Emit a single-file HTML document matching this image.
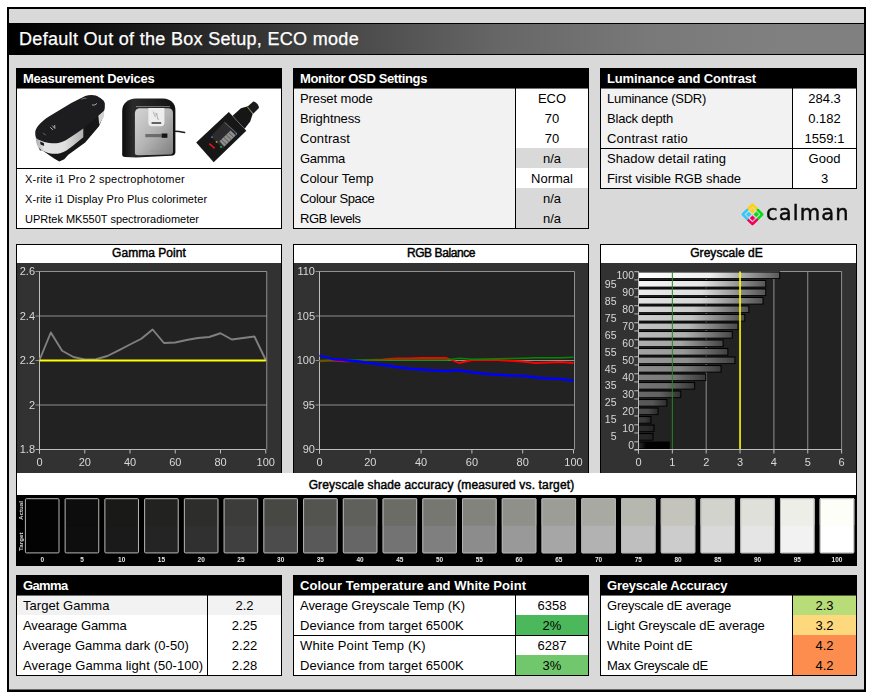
<!DOCTYPE html>
<html><head><meta charset="utf-8"><title>Default Out of the Box Setup, ECO mode</title>
<style>

html,body{margin:0;padding:0;background:#fff;}
body{width:873px;height:692px;overflow:hidden;position:relative;font-family:"Liberation Sans",sans-serif;color:#000;}
.abs{position:absolute;box-sizing:border-box;}
.frame{left:7px;top:7px;width:859px;height:685px;border:2px solid #000;background:#d9d9d9;box-shadow:inset 0 -1px 0 rgba(0,0,0,0.5);}
.title{left:9px;top:23px;width:855px;height:32px;background:linear-gradient(to right,#000 0%,#020202 2%,#131313 12%,#292929 23%,#3f3f3f 35%,#4b4b4b 41%,#666 57%,#797979 75%,#808080 90%,#808080 100%);border-top:1px solid #000;border-bottom:1px solid #000;}
.title span{position:absolute;left:10px;top:5px;font-size:18px;color:#fff;white-space:nowrap;letter-spacing:0.31px;-webkit-text-stroke:0.25px #fff;}
.panel{border:1px solid #000;background:#fff;overflow:hidden;}
.hd{left:0;top:0;right:0;height:19px;background:#000;color:#fff;font-weight:bold;font-size:13px;line-height:19px;padding-left:6px;white-space:nowrap;}
.row{left:0;height:20px;font-size:13px;line-height:22px;white-space:nowrap;}
.lab{left:0;top:0;height:20px;padding-left:6px;}
.val{top:0;height:20px;text-align:center;}
.g{background:#f2f2f2;}
.na{background:#d9d9d9;}
.sm{font-size:11px;line-height:20px;left:8px;white-space:nowrap;letter-spacing:0.1px;}
.ct{left:0;right:0;top:0;height:18px;background:#fff;font-weight:normal;-webkit-text-stroke:0.45px #000;font-size:12px;line-height:17px;text-align:center;}
svg text{font-family:"Liberation Sans",sans-serif;}

</style></head><body>
<div class="abs frame"></div>
<div class="abs title"><span>Default Out of the Box Setup, ECO mode</span></div>
<div class="abs panel " style="left:16px;top:68px;width:266px;height:161px;">
<div class="abs hd" style="letter-spacing:-0.27px">Measurement Devices</div><div class="abs" style="left:0;top:20px;width:264px;height:79px;background:#fff;"><svg class="abs" style="left:0;top:0;will-change:transform;" width="264" height="79" viewBox="17 89 264 79">
<defs>
<linearGradient id="sv1" x1="0" y1="0" x2="1" y2="0"><stop offset="0" stop-color="#a8a8a8"/><stop offset="0.18" stop-color="#e4e4e4"/><stop offset="0.6" stop-color="#e0e0e0"/><stop offset="1" stop-color="#b0b0b0"/></linearGradient>
<linearGradient id="sv2" x1="0" y1="0" x2="1" y2="1"><stop offset="0" stop-color="#d6d6d6"/><stop offset="0.5" stop-color="#b4b4b4"/><stop offset="1" stop-color="#7e7e7e"/></linearGradient>
<linearGradient id="bk2" x1="0" y1="0" x2="1" y2="0"><stop offset="0" stop-color="#0c0c0c"/><stop offset="0.2" stop-color="#2a2a2a"/><stop offset="1" stop-color="#111"/></linearGradient>
</defs>
<!-- device 1 : spectrophotometer -->
<path d="M38.4,147.3 L40,150.4 L42.2,150.2 L49.7,155.5 L54.5,158.7 L59.3,161.5 L64.3,159.3 L68.3,154.7 L85.2,142.4 L99,126.2 L103.9,115 L103.9,110 L83.3,127 L60,150 Z" fill="#161616"/>
<path d="M35.6,135 L36,140.8 C36.5,144 37.5,146 38.4,147.3 C40,149.5 42,150.5 44,151.3 C47,152.8 50,153.5 52.1,153.7 C55,154 58,153.8 60.1,153.3 C62.5,152.6 64.5,151.7 66.5,150.5 L72.9,145.7 L83.3,137.2 L83.3,127.5 L68.1,138 L52,143 L40,140 Z" fill="url(#sv1)"/>
<path d="M98.3,115.2 L104.2,110 L104,116.5 L99.2,124.5 Z" fill="#d2d2d2"/>
<path d="M35.2,132.8 C35.2,128 40,122.5 48.1,116.9 L71.3,103 L85.2,96.1 C90,94.3 96,94.6 99,97.3 C103,99.5 105.5,102 104.8,105.4 C105,108 104.5,110 103.7,111.1 L83.3,128.4 L76.1,133.6 L68.1,138.8 C65,141 62,142.2 60.1,142.5 C57,143.3 54,143.4 52.1,143.3 C48,143 45,142.3 42.4,141.3 C39,140 36.5,139 36,137.6 C35.4,136 35.2,134.5 35.2,132.8 Z" fill="#1d1d1f"/>
<path d="M81.5,99.3 q2.5,-1.6 5,-1" stroke="#9a9a9a" stroke-width="0.7" fill="none"/>
<path d="M92,105 q3,0.8 5,-1.6" stroke="#b5b5b5" stroke-width="0.9" fill="none"/>
<path d="M50.2,127.3 l2.8,2.6 M52.3,125.6 l2.6,3 M54.6,125 l0.3,3.4" stroke="#d0d0d0" stroke-width="0.8" fill="none"/>
<path d="M42.8,133.2 l3.2,1.8" stroke="#8a8a8a" stroke-width="0.6" fill="none"/>
<path d="M40,141.6 L43.8,143 L44.2,145.9 L40.6,144.6 Z" fill="#1a1a1a"/>
<!-- device 2 : colorimeter -->
<path d="M122.2,154.5 L122.2,111 C122.2,103 128,98.6 136,98.4 L163,98.4 C170.5,98.6 175.4,103 175.4,110 L175.4,152 C175.4,154.5 174,155.5 171,155.8 L136,157.4 L125,157 C123,156.8 122.2,156 122.2,154.5 Z" fill="url(#bk2)"/>
<path d="M134.9,153 L134.9,113.5 C134.9,110 137,108.2 140.5,108.2 L168,108.2 C171.3,108.2 173,110 173,113 L173,151.5 C173,153.6 172,154.3 170,154.4 L138,155.2 C136,155.2 134.9,154.6 134.9,153 Z" fill="url(#sv2)"/>
<path d="M136,106.6 H170" stroke="#bdbdbd" stroke-width="0.6"/>
<path d="M148.3,108 H164.4 V122.5 C164.4,125 163,126.2 161,126.2 H151.6 C149.5,126.2 148.3,125 148.3,122.5 Z" fill="#ededed"/>
<path d="M151.6,123 H161.2" stroke="#1a1a1a" stroke-width="1.3"/>
<path d="M153.2,111.6 l2.2,5.5 M155.3,113 q2,0 0.5,2.5 M156.8,113.2 l0.8,5.8 l1.6,0.3" stroke="#777" stroke-width="0.5" fill="none"/>
<rect x="145.3" y="134" width="16" height="3.2" fill="#555" opacity="0.75"/>
<rect x="161.6" y="133.5" width="5.8" height="4.3" fill="#151515"/>
<path d="M150,151 H167" stroke="#8e8e8e" stroke-width="0.7" stroke-dasharray="1.2 0.8"/>
<path d="M175.4,131.2 L179,131.4 L184.6,132.6" stroke="#1c1c1c" stroke-width="1.5" fill="none" stroke-linecap="round"/>
<!-- device 3 : spectroradiometer -->
<path d="M232.6,115.8 L240.9,108.2 L247.8,106.3 L252.8,113.8 L250.2,121.5 L244.6,128.8 Z" fill="#161616"/>
<path d="M247.6,106.6 L253,101.7 C255,100.8 259.3,105.3 258.9,108 L253.2,113.8 Z" fill="#1b1b1b"/>
<path d="M247.3,107 L252.9,114" stroke="#c9ad4a" stroke-width="0.7"/>
<path d="M196.2,142.4 L228.8,112.1 L246.3,130.8 L213.7,162.2 Z" fill="#171717"/>
<path d="M210.8,136.6 L224.7,121.5 L237.4,133.1 L223,148.7 Z" fill="#2c2c2e"/>
<path d="M219.5,141.2 L230.5,130.6 L235.7,135.4 L224.3,146.6 Z" fill="#8f8f8f"/>
<path d="M221.2,139.6 l5,4.7 M223.7,137.2 l5,4.7 M226.2,134.8 l5,4.7 M228.6,132.5 l5,4.7" stroke="#3c3c3c" stroke-width="0.7"/>
<path d="M224.5,122.3 L236.8,133.4" stroke="#777" stroke-width="0.8"/>
<path d="M209.3,143.6 l5.4,4.8" stroke="#e0181e" stroke-width="1.5"/>
<circle cx="212" cy="137.2" r="0.9" fill="#3a7ad6"/>
<circle cx="216.6" cy="141.9" r="0.9" fill="#d9a520"/>
<circle cx="221" cy="147" r="1" fill="#21b23a"/>
<circle cx="236.3" cy="133.8" r="0.9" fill="#3a8ae6"/>
</svg>
</div><div class="abs" style="left:0;top:99px;width:264px;height:1px;background:#000;"></div><div class="abs" style="left:0;top:19px;width:264px;height:1px;background:rgba(0,0,0,0.55);"></div><div class="abs sm" style="top:100px;letter-spacing:0.23px">X-rite i1 Pro 2 spectrophotomer</div><div class="abs sm" style="top:120px;letter-spacing:0.08px">X-rite i1 Display Pro Plus colorimeter</div><div class="abs sm" style="top:140px;letter-spacing:0px">UPRtek MK550T spectroradiometer</div>
</div>
<div class="abs panel " style="left:293px;top:68px;width:296px;height:161px;">
<div class="abs hd" style="letter-spacing:-0.367px">Monitor OSD Settings</div><div class="abs row" style="top:19px;width:294px;"><div class="abs lab" style="width:221px;background:#f2f2f2;letter-spacing:-0.109px">Preset mode</div><div class="abs val" style="left:222px;width:72px;background:#fff;">ECO</div></div><div class="abs row" style="top:39px;width:294px;"><div class="abs lab" style="width:221px;background:#f2f2f2;letter-spacing:-0.092px">Brightness</div><div class="abs val" style="left:222px;width:72px;background:#fff;">70</div></div><div class="abs row" style="top:59px;width:294px;"><div class="abs lab" style="width:221px;background:#f2f2f2;letter-spacing:0.107px">Contrast</div><div class="abs val" style="left:222px;width:72px;background:#fff;">70</div></div><div class="abs row" style="top:79px;width:294px;"><div class="abs lab" style="width:221px;background:#f2f2f2;letter-spacing:-0.247px">Gamma</div><div class="abs val" style="left:222px;width:72px;background:#d9d9d9;">n/a</div></div><div class="abs row" style="top:99px;width:294px;"><div class="abs lab" style="width:221px;background:#f2f2f2;letter-spacing:0.003px">Colour Temp</div><div class="abs val" style="left:222px;width:72px;background:#fff;">Normal</div></div><div class="abs row" style="top:119px;width:294px;"><div class="abs lab" style="width:221px;background:#f2f2f2;letter-spacing:-0.357px">Colour Space</div><div class="abs val" style="left:222px;width:72px;background:#d9d9d9;">n/a</div></div><div class="abs row" style="top:139px;width:294px;"><div class="abs lab" style="width:221px;background:#f2f2f2;letter-spacing:-0.453px">RGB levels</div><div class="abs val" style="left:222px;width:72px;background:#d9d9d9;">n/a</div></div><div class="abs" style="left:221px;top:19px;width:1px;height:140px;background:#000;"></div><div class="abs" style="left:0;top:19px;width:294px;height:1px;background:rgba(0,0,0,0.55);"></div>
</div>
<div class="abs panel " style="left:600px;top:68px;width:257px;height:121px;">
<div class="abs hd" style="letter-spacing:-0.156px">Luminance and Contrast</div><div class="abs row" style="top:19px;width:255px;"><div class="abs lab" style="width:191px;background:#f2f2f2;letter-spacing:-0.289px">Luminance (SDR)</div><div class="abs val" style="left:192px;width:63px;background:#fff;">284.3</div></div><div class="abs row" style="top:39px;width:255px;"><div class="abs lab" style="width:191px;background:#f2f2f2;letter-spacing:-0.176px">Black depth</div><div class="abs val" style="left:192px;width:63px;background:#fff;">0.182</div></div><div class="abs row" style="top:59px;width:255px;"><div class="abs lab" style="width:191px;background:#f2f2f2;letter-spacing:0.211px">Contrast ratio</div><div class="abs val" style="left:192px;width:63px;background:#fff;">1559:1</div></div><div class="abs row" style="top:79px;width:255px;"><div class="abs lab" style="width:191px;background:#f2f2f2;letter-spacing:0.059px">Shadow detail rating</div><div class="abs val" style="left:192px;width:63px;background:#fff;">Good</div></div><div class="abs row" style="top:99px;width:255px;"><div class="abs lab" style="width:191px;background:#f2f2f2;letter-spacing:-0.079px">First visible RGB shade</div><div class="abs val" style="left:192px;width:63px;background:#fff;">3</div></div><div class="abs" style="left:191px;top:19px;width:1px;height:100px;background:#000;"></div><div class="abs" style="left:0;top:19px;width:255px;height:1px;background:rgba(0,0,0,0.55);"></div><div class="abs" style="left:0;top:79px;width:255px;height:1px;background:#000;"></div>
</div>
<svg class="abs" style="left:738px;top:198px;will-change:transform;" width="116" height="32" viewBox="738 198 116 32">
<g transform="translate(752.5,214.4)" fill="none" stroke-width="2.5" stroke-linecap="round" stroke-linejoin="round">
 <path d="M-4.4,-5.4 L0,-9.7 L4.4,-5.4" stroke="#ffd200"/>
 <path d="M5.4,-4.4 L9.8,0 L5.4,4.4" stroke="#00dc14"/>
 <path d="M4.4,5.4 L0,9.7 L-4.4,5.4" stroke="#f0005a"/>
 <path d="M-5.4,4.4 L-9.8,0 L-5.4,-4.4" stroke="#32c8fa"/>
 <path d="M0,-6.1 L2.4,-3.7 L0,-1.3 L-2.4,-3.7 Z" fill="#ffd200" stroke="#ffd200" stroke-width="0.6"/>
 <path d="M6.2,0 L3.8,2.4 L1.4,0 L3.8,-2.4 Z" fill="#00dc14" stroke="#00dc14" stroke-width="0.6"/>
 <path d="M0,6.1 L-2.4,3.7 L0,1.3 L2.4,3.7 Z" fill="#f0005a" stroke="#f0005a" stroke-width="0.6"/>
 <path d="M-6.2,0 L-3.8,-2.4 L-1.4,0 L-3.8,2.4 Z" fill="#32c8fa" stroke="#32c8fa" stroke-width="0.6"/>
</g>
<text x="766" y="220.4" style="font-family:'DejaVu Sans',sans-serif" font-size="21" fill="#0a0a0a" stroke="#0a0a0a" stroke-width="0.45" letter-spacing="1.15">calman</text>
</svg>
<div class="abs panel " style="left:16px;top:244px;width:266px;height:230px;">
<div class="abs ct" style="letter-spacing:0.036px">Gamma Point</div><svg class="abs" style="left:0;top:18px;will-change:transform;" width="264" height="210" viewBox="17 263 264 210"><rect x="17" y="263" width="264" height="210" fill="#323232"/><rect x="39.5" y="271.5" width="227.25" height="178.0" fill="#222222"/><line x1="35.5" y1="271.5" x2="266.75" y2="271.5" stroke="#9c9c9c" stroke-width="0.9"/><line x1="35.5" y1="316.0" x2="266.75" y2="316.0" stroke="#9c9c9c" stroke-width="0.9"/><line x1="35.5" y1="360.5" x2="266.75" y2="360.5" stroke="#9c9c9c" stroke-width="0.9"/><line x1="35.5" y1="405.0" x2="266.75" y2="405.0" stroke="#9c9c9c" stroke-width="0.9"/><line x1="266.75" y1="271.5" x2="266.75" y2="449.5" stroke="#9c9c9c" stroke-width="0.9"/><line x1="39.5" y1="271.5" x2="39.5" y2="453.5" stroke="#bdbdbd" stroke-width="1"/><line x1="35.5" y1="449.5" x2="265.75" y2="449.5" stroke="#bdbdbd" stroke-width="1"/><line x1="39.5" y1="449.5" x2="39.5" y2="453.5" stroke="#bdbdbd" stroke-width="1"/><text x="39.5" y="466" font-size="11" fill="#d8d8d8" text-anchor="middle">0</text><line x1="84.75" y1="449.5" x2="84.75" y2="453.5" stroke="#bdbdbd" stroke-width="1"/><text x="84.75" y="466" font-size="11" fill="#d8d8d8" text-anchor="middle">20</text><line x1="130.0" y1="449.5" x2="130.0" y2="453.5" stroke="#bdbdbd" stroke-width="1"/><text x="130.0" y="466" font-size="11" fill="#d8d8d8" text-anchor="middle">40</text><line x1="175.25" y1="449.5" x2="175.25" y2="453.5" stroke="#bdbdbd" stroke-width="1"/><text x="175.25" y="466" font-size="11" fill="#d8d8d8" text-anchor="middle">60</text><line x1="220.5" y1="449.5" x2="220.5" y2="453.5" stroke="#bdbdbd" stroke-width="1"/><text x="220.5" y="466" font-size="11" fill="#d8d8d8" text-anchor="middle">80</text><line x1="265.75" y1="449.5" x2="265.75" y2="453.5" stroke="#bdbdbd" stroke-width="1"/><text x="265.75" y="466" font-size="11" fill="#d8d8d8" text-anchor="middle">100</text><text x="35.0" y="275.1" font-size="11" fill="#d8d8d8" text-anchor="end">2.6</text><text x="35.0" y="319.6" font-size="11" fill="#d8d8d8" text-anchor="end">2.4</text><text x="35.0" y="364.1" font-size="11" fill="#d8d8d8" text-anchor="end">2.2</text><text x="35.0" y="408.6" font-size="11" fill="#d8d8d8" text-anchor="end">2</text><text x="35.0" y="453.1" font-size="11" fill="#d8d8d8" text-anchor="end">1.8</text><polyline points="39.50,360.00 50.81,332.50 62.12,350.75 73.44,357.00 84.75,359.50 96.06,359.25 107.38,356.00 118.69,350.30 130.00,344.50 141.31,338.75 152.62,329.50 163.94,343.00 175.25,342.50 186.56,340.00 197.88,338.00 209.19,337.00 220.50,333.25 231.81,339.50 243.12,338.00 254.44,336.50 265.75,360.00" fill="none" stroke="#808080" stroke-width="1.9" stroke-linejoin="round"/><line x1="39.5" y1="360.5" x2="265.75" y2="360.5" stroke="#ffff00" stroke-width="2"/></svg>
</div>
<div class="abs panel " style="left:293px;top:244px;width:296px;height:230px;">
<div class="abs ct" style="letter-spacing:-0.405px">RGB Balance</div><svg class="abs" style="left:0;top:18px;will-change:transform;" width="294" height="210" viewBox="294 263 294 210"><rect x="294" y="263" width="294" height="210" fill="#323232"/><rect x="319.5" y="271.5" width="255.0" height="178.0" fill="#222222"/><line x1="315.5" y1="271.5" x2="574.5" y2="271.5" stroke="#9c9c9c" stroke-width="0.9"/><line x1="315.5" y1="316.0" x2="574.5" y2="316.0" stroke="#9c9c9c" stroke-width="0.9"/><line x1="315.5" y1="360.5" x2="574.5" y2="360.5" stroke="#9c9c9c" stroke-width="0.9"/><line x1="315.5" y1="405.0" x2="574.5" y2="405.0" stroke="#9c9c9c" stroke-width="0.9"/><line x1="574.5" y1="271.5" x2="574.5" y2="449.5" stroke="#9c9c9c" stroke-width="0.9"/><line x1="319.5" y1="271.5" x2="319.5" y2="453.5" stroke="#bdbdbd" stroke-width="1"/><line x1="315.5" y1="449.5" x2="573.5" y2="449.5" stroke="#bdbdbd" stroke-width="1"/><line x1="319.5" y1="449.5" x2="319.5" y2="453.5" stroke="#bdbdbd" stroke-width="1"/><text x="319.5" y="466" font-size="11" fill="#d8d8d8" text-anchor="middle">0</text><line x1="370.3" y1="449.5" x2="370.3" y2="453.5" stroke="#bdbdbd" stroke-width="1"/><text x="370.3" y="466" font-size="11" fill="#d8d8d8" text-anchor="middle">20</text><line x1="421.1" y1="449.5" x2="421.1" y2="453.5" stroke="#bdbdbd" stroke-width="1"/><text x="421.1" y="466" font-size="11" fill="#d8d8d8" text-anchor="middle">40</text><line x1="471.9" y1="449.5" x2="471.9" y2="453.5" stroke="#bdbdbd" stroke-width="1"/><text x="471.9" y="466" font-size="11" fill="#d8d8d8" text-anchor="middle">60</text><line x1="522.7" y1="449.5" x2="522.7" y2="453.5" stroke="#bdbdbd" stroke-width="1"/><text x="522.7" y="466" font-size="11" fill="#d8d8d8" text-anchor="middle">80</text><line x1="573.5" y1="449.5" x2="573.5" y2="453.5" stroke="#bdbdbd" stroke-width="1"/><text x="573.5" y="466" font-size="11" fill="#d8d8d8" text-anchor="middle">100</text><text x="315.0" y="275.1" font-size="11" fill="#d8d8d8" text-anchor="end">110</text><text x="315.0" y="319.6" font-size="11" fill="#d8d8d8" text-anchor="end">105</text><text x="315.0" y="364.1" font-size="11" fill="#d8d8d8" text-anchor="end">100</text><text x="315.0" y="408.6" font-size="11" fill="#d8d8d8" text-anchor="end">95</text><text x="315.0" y="453.1" font-size="11" fill="#d8d8d8" text-anchor="end">90</text><polyline points="319.50,361.25 332.20,360.50 344.90,361.25 357.60,361.00 370.30,360.00 383.00,359.50 395.70,358.50 408.40,358.50 421.10,358.00 433.80,358.00 446.50,358.00 459.20,363.00 471.90,360.00 484.60,360.00 497.30,360.00 510.00,360.75 522.70,361.50 535.40,363.00 548.10,362.50 560.80,362.00 573.50,363.00" fill="none" stroke="#ff0000" stroke-width="1.8" stroke-linejoin="round"/><polyline points="319.50,360.50 332.20,360.20 344.90,360.00 357.60,360.00 370.30,360.00 383.00,360.00 395.70,360.00 408.40,360.00 421.10,360.00 433.80,360.00 446.50,360.00 459.20,358.25 471.90,359.25 484.60,359.00 497.30,358.75 510.00,358.50 522.70,358.25 535.40,357.75 548.10,357.75 560.80,357.75 573.50,357.25" fill="none" stroke="#008a00" stroke-width="1.6" stroke-linejoin="round"/><polyline points="319.50,355.50 332.20,359.00 344.90,360.25 357.60,361.25 370.30,363.00 383.00,364.75 395.70,367.00 408.40,368.50 421.10,369.50 433.80,370.50 446.50,371.00 459.20,370.25 471.90,372.25 484.60,373.75 497.30,374.75 510.00,375.50 522.70,375.75 535.40,377.50 548.10,378.50 560.80,379.00 573.50,380.75" fill="none" stroke="#0000ff" stroke-width="2.3" stroke-linejoin="round"/></svg>
</div>
<div class="abs panel " style="left:600px;top:244px;width:257px;height:230px;">
<div class="abs ct" style="padding-right:4px;letter-spacing:0.039px">Greyscale dE</div><svg class="abs" style="left:0;top:18px;will-change:transform;" width="255" height="210" viewBox="601 263 255 210"><rect x="601" y="263" width="255" height="210" fill="#323232"/><defs><linearGradient id="b0" x1="0" x2="1" y1="0" y2="0"><stop offset="0" stop-color="#2a2a2a"/><stop offset="0.25" stop-color="#000"/><stop offset="1" stop-color="#000"/></linearGradient><linearGradient id="b5" x1="0" x2="1" y1="0" y2="0"><stop offset="0" stop-color="rgb(38,38,38)"/><stop offset="0.5" stop-color="rgb(38,38,38)"/><stop offset="1" stop-color="rgb(33,33,33)"/></linearGradient><linearGradient id="b10" x1="0" x2="1" y1="0" y2="0"><stop offset="0" stop-color="rgb(45,45,45)"/><stop offset="0.5" stop-color="rgb(44,44,44)"/><stop offset="1" stop-color="rgb(35,35,35)"/></linearGradient><linearGradient id="b15" x1="0" x2="1" y1="0" y2="0"><stop offset="0" stop-color="rgb(61,61,61)"/><stop offset="0.5" stop-color="rgb(59,59,59)"/><stop offset="1" stop-color="rgb(39,39,39)"/></linearGradient><linearGradient id="b20" x1="0" x2="1" y1="0" y2="0"><stop offset="0" stop-color="rgb(76,76,76)"/><stop offset="0.5" stop-color="rgb(73,73,73)"/><stop offset="1" stop-color="rgb(43,43,43)"/></linearGradient><linearGradient id="b25" x1="0" x2="1" y1="0" y2="0"><stop offset="0" stop-color="rgb(90,90,90)"/><stop offset="0.5" stop-color="rgb(86,86,86)"/><stop offset="1" stop-color="rgb(47,47,47)"/></linearGradient><linearGradient id="b30" x1="0" x2="1" y1="0" y2="0"><stop offset="0" stop-color="rgb(103,103,103)"/><stop offset="0.5" stop-color="rgb(98,98,98)"/><stop offset="1" stop-color="rgb(50,50,50)"/></linearGradient><linearGradient id="b35" x1="0" x2="1" y1="0" y2="0"><stop offset="0" stop-color="rgb(116,116,116)"/><stop offset="0.5" stop-color="rgb(110,110,110)"/><stop offset="1" stop-color="rgb(54,54,54)"/></linearGradient><linearGradient id="b40" x1="0" x2="1" y1="0" y2="0"><stop offset="0" stop-color="rgb(128,128,128)"/><stop offset="0.5" stop-color="rgb(122,122,122)"/><stop offset="1" stop-color="rgb(57,57,57)"/></linearGradient><linearGradient id="b45" x1="0" x2="1" y1="0" y2="0"><stop offset="0" stop-color="rgb(140,140,140)"/><stop offset="0.5" stop-color="rgb(133,133,133)"/><stop offset="1" stop-color="rgb(60,60,60)"/></linearGradient><linearGradient id="b50" x1="0" x2="1" y1="0" y2="0"><stop offset="0" stop-color="rgb(152,152,152)"/><stop offset="0.5" stop-color="rgb(144,144,144)"/><stop offset="1" stop-color="rgb(63,63,63)"/></linearGradient><linearGradient id="b55" x1="0" x2="1" y1="0" y2="0"><stop offset="0" stop-color="rgb(163,163,163)"/><stop offset="0.5" stop-color="rgb(154,154,154)"/><stop offset="1" stop-color="rgb(66,66,66)"/></linearGradient><linearGradient id="b60" x1="0" x2="1" y1="0" y2="0"><stop offset="0" stop-color="rgb(174,174,174)"/><stop offset="0.5" stop-color="rgb(164,164,164)"/><stop offset="1" stop-color="rgb(69,69,69)"/></linearGradient><linearGradient id="b65" x1="0" x2="1" y1="0" y2="0"><stop offset="0" stop-color="rgb(185,185,185)"/><stop offset="0.5" stop-color="rgb(175,175,175)"/><stop offset="1" stop-color="rgb(72,72,72)"/></linearGradient><linearGradient id="b70" x1="0" x2="1" y1="0" y2="0"><stop offset="0" stop-color="rgb(195,195,195)"/><stop offset="0.5" stop-color="rgb(184,184,184)"/><stop offset="1" stop-color="rgb(74,74,74)"/></linearGradient><linearGradient id="b75" x1="0" x2="1" y1="0" y2="0"><stop offset="0" stop-color="rgb(206,206,206)"/><stop offset="0.5" stop-color="rgb(194,194,194)"/><stop offset="1" stop-color="rgb(77,77,77)"/></linearGradient><linearGradient id="b80" x1="0" x2="1" y1="0" y2="0"><stop offset="0" stop-color="rgb(216,216,216)"/><stop offset="0.5" stop-color="rgb(203,203,203)"/><stop offset="1" stop-color="rgb(80,80,80)"/></linearGradient><linearGradient id="b85" x1="0" x2="1" y1="0" y2="0"><stop offset="0" stop-color="rgb(226,226,226)"/><stop offset="0.5" stop-color="rgb(213,213,213)"/><stop offset="1" stop-color="rgb(82,82,82)"/></linearGradient><linearGradient id="b90" x1="0" x2="1" y1="0" y2="0"><stop offset="0" stop-color="rgb(236,236,236)"/><stop offset="0.5" stop-color="rgb(222,222,222)"/><stop offset="1" stop-color="rgb(85,85,85)"/></linearGradient><linearGradient id="b95" x1="0" x2="1" y1="0" y2="0"><stop offset="0" stop-color="rgb(245,245,245)"/><stop offset="0.5" stop-color="rgb(230,230,230)"/><stop offset="1" stop-color="rgb(87,87,87)"/></linearGradient><linearGradient id="b100" x1="0" x2="1" y1="0" y2="0"><stop offset="0" stop-color="rgb(255,255,255)"/><stop offset="0.5" stop-color="rgb(240,240,240)"/><stop offset="1" stop-color="rgb(90,90,90)"/></linearGradient></defs><rect x="638.5" y="271.5" width="203.10000000000002" height="178.0" fill="#222222"/><line x1="706.2" y1="271.5" x2="706.2" y2="449.5" stroke="#9c9c9c" stroke-width="0.9"/><line x1="773.9" y1="271.5" x2="773.9" y2="449.5" stroke="#9c9c9c" stroke-width="0.9"/><line x1="807.75" y1="271.5" x2="807.75" y2="449.5" stroke="#9c9c9c" stroke-width="0.9"/><line x1="841.6" y1="271.5" x2="841.6" y2="449.5" stroke="#9c9c9c" stroke-width="0.9"/><line x1="638.5" y1="271.5" x2="841.6" y2="271.5" stroke="#9c9c9c" stroke-width="0.9"/><rect x="638.5" y="441.50" width="31.27" height="7.6" fill="#000"/><rect x="638.9" y="442.60" width="29.87" height="5.6" fill="url(#b0)"/><rect x="638.5" y="433.00" width="15.02" height="7.6" fill="#000"/><rect x="638.9" y="434.10" width="13.62" height="5.6" fill="url(#b5)"/><rect x="638.5" y="424.49" width="16.03" height="7.6" fill="#000"/><rect x="638.9" y="425.59" width="14.63" height="5.6" fill="url(#b10)"/><rect x="638.5" y="415.99" width="12.99" height="7.6" fill="#000"/><rect x="638.9" y="417.09" width="11.59" height="5.6" fill="url(#b15)"/><rect x="638.5" y="407.48" width="20.09" height="7.6" fill="#000"/><rect x="638.9" y="408.58" width="18.69" height="5.6" fill="url(#b20)"/><rect x="638.5" y="398.98" width="28.90" height="7.6" fill="#000"/><rect x="638.9" y="400.08" width="27.50" height="5.6" fill="url(#b25)"/><rect x="638.5" y="390.47" width="42.77" height="7.6" fill="#000"/><rect x="638.9" y="391.57" width="41.37" height="5.6" fill="url(#b30)"/><rect x="638.5" y="381.96" width="56.65" height="7.6" fill="#000"/><rect x="638.9" y="383.06" width="55.25" height="5.6" fill="url(#b35)"/><rect x="638.5" y="373.46" width="67.82" height="7.6" fill="#000"/><rect x="638.9" y="374.56" width="66.42" height="5.6" fill="url(#b40)"/><rect x="638.5" y="364.95" width="83.06" height="7.6" fill="#000"/><rect x="638.9" y="366.06" width="81.66" height="5.6" fill="url(#b45)"/><rect x="638.5" y="356.45" width="96.93" height="7.6" fill="#000"/><rect x="638.9" y="357.55" width="95.53" height="5.6" fill="url(#b50)"/><rect x="638.5" y="347.94" width="89.83" height="7.6" fill="#000"/><rect x="638.9" y="349.05" width="88.43" height="5.6" fill="url(#b55)"/><rect x="638.5" y="339.44" width="85.09" height="7.6" fill="#000"/><rect x="638.9" y="340.54" width="83.69" height="5.6" fill="url(#b60)"/><rect x="638.5" y="330.94" width="94.23" height="7.6" fill="#000"/><rect x="638.9" y="332.04" width="92.83" height="5.6" fill="url(#b65)"/><rect x="638.5" y="322.43" width="99.98" height="7.6" fill="#000"/><rect x="638.9" y="323.53" width="98.58" height="5.6" fill="url(#b70)"/><rect x="638.5" y="313.92" width="106.75" height="7.6" fill="#000"/><rect x="638.9" y="315.02" width="105.35" height="5.6" fill="url(#b75)"/><rect x="638.5" y="305.42" width="110.81" height="7.6" fill="#000"/><rect x="638.9" y="306.52" width="109.41" height="5.6" fill="url(#b80)"/><rect x="638.5" y="296.91" width="125.03" height="7.6" fill="#000"/><rect x="638.9" y="298.01" width="123.63" height="5.6" fill="url(#b85)"/><rect x="638.5" y="288.41" width="127.74" height="7.6" fill="#000"/><rect x="638.9" y="289.51" width="126.34" height="5.6" fill="url(#b90)"/><rect x="638.5" y="279.90" width="127.74" height="7.6" fill="#000"/><rect x="638.9" y="281.00" width="126.34" height="5.6" fill="url(#b95)"/><rect x="638.5" y="271.40" width="141.62" height="7.6" fill="#000"/><rect x="638.9" y="272.50" width="140.22" height="5.6" fill="url(#b100)"/><line x1="672.35" y1="271.5" x2="672.35" y2="449.5" stroke="#1f8a1f" stroke-width="1"/><line x1="740.05" y1="271.5" x2="740.05" y2="449.5" stroke="#ffff00" stroke-width="1.6"/><line x1="638.5" y1="271.5" x2="638.5" y2="453.5" stroke="#bdbdbd" stroke-width="1"/><line x1="634.5" y1="449.5" x2="841.6" y2="449.5" stroke="#bdbdbd" stroke-width="1"/><line x1="638.5" y1="449.5" x2="638.5" y2="453.5" stroke="#bdbdbd" stroke-width="1"/><text x="638.5" y="466" font-size="11" fill="#d8d8d8" text-anchor="middle">0</text><line x1="672.35" y1="449.5" x2="672.35" y2="453.5" stroke="#bdbdbd" stroke-width="1"/><text x="672.35" y="466" font-size="11" fill="#d8d8d8" text-anchor="middle">1</text><line x1="706.2" y1="449.5" x2="706.2" y2="453.5" stroke="#bdbdbd" stroke-width="1"/><text x="706.2" y="466" font-size="11" fill="#d8d8d8" text-anchor="middle">2</text><line x1="740.05" y1="449.5" x2="740.05" y2="453.5" stroke="#bdbdbd" stroke-width="1"/><text x="740.05" y="466" font-size="11" fill="#d8d8d8" text-anchor="middle">3</text><line x1="773.9" y1="449.5" x2="773.9" y2="453.5" stroke="#bdbdbd" stroke-width="1"/><text x="773.9" y="466" font-size="11" fill="#d8d8d8" text-anchor="middle">4</text><line x1="807.75" y1="449.5" x2="807.75" y2="453.5" stroke="#bdbdbd" stroke-width="1"/><text x="807.75" y="466" font-size="11" fill="#d8d8d8" text-anchor="middle">5</text><line x1="841.6" y1="449.5" x2="841.6" y2="453.5" stroke="#bdbdbd" stroke-width="1"/><text x="841.6" y="466" font-size="11" fill="#d8d8d8" text-anchor="middle">6</text><text x="634" y="448.55" font-size="10.5" fill="#d8d8d8" text-anchor="end">0</text><path d="M634.3,441.80 H638.5 M634.3,450.00 H638.5" stroke="#cfcfcf" stroke-width="0.9" fill="none"/><text x="616.5" y="439.95" font-size="10.5" fill="#d8d8d8" text-anchor="end">5</text><text x="634" y="431.60" font-size="10.5" fill="#d8d8d8" text-anchor="end">10</text><path d="M634.3,424.79 H638.5 M634.3,432.99 H638.5" stroke="#cfcfcf" stroke-width="0.9" fill="none"/><text x="616.5" y="423.09" font-size="10.5" fill="#d8d8d8" text-anchor="end">15</text><text x="634" y="414.65" font-size="10.5" fill="#d8d8d8" text-anchor="end">20</text><path d="M634.3,407.78 H638.5 M634.3,415.98 H638.5" stroke="#cfcfcf" stroke-width="0.9" fill="none"/><text x="616.5" y="406.24" font-size="10.5" fill="#d8d8d8" text-anchor="end">25</text><text x="634" y="397.70" font-size="10.5" fill="#d8d8d8" text-anchor="end">30</text><path d="M634.3,390.77 H638.5 M634.3,398.97 H638.5" stroke="#cfcfcf" stroke-width="0.9" fill="none"/><text x="616.5" y="389.38" font-size="10.5" fill="#d8d8d8" text-anchor="end">35</text><text x="634" y="380.75" font-size="10.5" fill="#d8d8d8" text-anchor="end">40</text><path d="M634.3,373.76 H638.5 M634.3,381.96 H638.5" stroke="#cfcfcf" stroke-width="0.9" fill="none"/><text x="616.5" y="372.53" font-size="10.5" fill="#d8d8d8" text-anchor="end">45</text><text x="634" y="363.80" font-size="10.5" fill="#d8d8d8" text-anchor="end">50</text><path d="M634.3,356.75 H638.5 M634.3,364.95 H638.5" stroke="#cfcfcf" stroke-width="0.9" fill="none"/><text x="616.5" y="355.67" font-size="10.5" fill="#d8d8d8" text-anchor="end">55</text><text x="634" y="346.85" font-size="10.5" fill="#d8d8d8" text-anchor="end">60</text><path d="M634.3,339.74 H638.5 M634.3,347.94 H638.5" stroke="#cfcfcf" stroke-width="0.9" fill="none"/><text x="616.5" y="338.82" font-size="10.5" fill="#d8d8d8" text-anchor="end">65</text><text x="634" y="329.90" font-size="10.5" fill="#d8d8d8" text-anchor="end">70</text><path d="M634.3,322.73 H638.5 M634.3,330.93 H638.5" stroke="#cfcfcf" stroke-width="0.9" fill="none"/><text x="616.5" y="321.96" font-size="10.5" fill="#d8d8d8" text-anchor="end">75</text><text x="634" y="312.95" font-size="10.5" fill="#d8d8d8" text-anchor="end">80</text><path d="M634.3,305.72 H638.5 M634.3,313.92 H638.5" stroke="#cfcfcf" stroke-width="0.9" fill="none"/><text x="616.5" y="305.11" font-size="10.5" fill="#d8d8d8" text-anchor="end">85</text><text x="634" y="296.00" font-size="10.5" fill="#d8d8d8" text-anchor="end">90</text><path d="M634.3,288.71 H638.5 M634.3,296.91 H638.5" stroke="#cfcfcf" stroke-width="0.9" fill="none"/><text x="616.5" y="288.25" font-size="10.5" fill="#d8d8d8" text-anchor="end">95</text><text x="634" y="279.05" font-size="10.5" fill="#d8d8d8" text-anchor="end">100</text><path d="M634.3,271.70 H638.5 M634.3,279.90 H638.5" stroke="#cfcfcf" stroke-width="0.9" fill="none"/></svg>
</div>
<div class="abs" style="left:16px;top:473px;width:841px;height:22px;background:#fff;border-left:1px solid #000;border-right:1px solid #000;font-weight:normal;-webkit-text-stroke:0.45px #000;font-size:12px;line-height:24px;padding-left:10px;text-align:center;letter-spacing:0.151px;">Greyscale shade accuracy (measured vs. target)</div>
<svg class="abs" style="left:16px;top:495px;will-change:transform;" width="841" height="71" viewBox="16 495 841 71"><rect x="16" y="495" width="841" height="71" fill="#000"/><rect x="25.00" y="498.3" width="34.4" height="55" rx="1" fill="rgb(3,3,3)"/><rect x="25.00" y="498.3" width="34.4" height="27.5" rx="1" fill="rgb(3,3,3)"/><rect x="25.40" y="498.7" width="33.6" height="54.2" rx="1" fill="none" stroke="#b4b4b4" stroke-width="1"/><text x="42.20" y="562" font-size="6.5" font-weight="bold" fill="#e6e6e6" text-anchor="middle">0</text><rect x="64.74" y="498.3" width="34.4" height="55" rx="1" fill="rgb(14,14,14)"/><rect x="64.74" y="498.3" width="34.4" height="27.5" rx="1" fill="rgb(13,13,13)"/><rect x="65.14" y="498.7" width="33.6" height="54.2" rx="1" fill="none" stroke="#b4b4b4" stroke-width="1"/><text x="81.94" y="562" font-size="6.5" font-weight="bold" fill="#e6e6e6" text-anchor="middle">5</text><rect x="104.48" y="498.3" width="34.4" height="55" rx="1" fill="rgb(26,26,26)"/><rect x="104.48" y="498.3" width="34.4" height="27.5" rx="1" fill="rgb(25,25,24)"/><rect x="104.88" y="498.7" width="33.6" height="54.2" rx="1" fill="none" stroke="#b4b4b4" stroke-width="1"/><text x="121.68" y="562" font-size="6.5" font-weight="bold" fill="#e6e6e6" text-anchor="middle">10</text><rect x="144.22" y="498.3" width="34.4" height="55" rx="1" fill="rgb(36,36,36)"/><rect x="144.22" y="498.3" width="34.4" height="27.5" rx="1" fill="rgb(34,34,32)"/><rect x="144.62" y="498.7" width="33.6" height="54.2" rx="1" fill="none" stroke="#b4b4b4" stroke-width="1"/><text x="161.42" y="562" font-size="6.5" font-weight="bold" fill="#e6e6e6" text-anchor="middle">15</text><rect x="183.96" y="498.3" width="34.4" height="55" rx="1" fill="rgb(48,48,48)"/><rect x="183.96" y="498.3" width="34.4" height="27.5" rx="1" fill="rgb(45,45,43)"/><rect x="184.36" y="498.7" width="33.6" height="54.2" rx="1" fill="none" stroke="#b4b4b4" stroke-width="1"/><text x="201.16" y="562" font-size="6.5" font-weight="bold" fill="#e6e6e6" text-anchor="middle">20</text><rect x="223.70" y="498.3" width="34.4" height="55" rx="1" fill="rgb(64,64,64)"/><rect x="223.70" y="498.3" width="34.4" height="27.5" rx="1" fill="rgb(60,60,58)"/><rect x="224.10" y="498.7" width="33.6" height="54.2" rx="1" fill="none" stroke="#b4b4b4" stroke-width="1"/><text x="240.90" y="562" font-size="6.5" font-weight="bold" fill="#e6e6e6" text-anchor="middle">25</text><rect x="263.44" y="498.3" width="34.4" height="55" rx="1" fill="rgb(76,76,76)"/><rect x="263.44" y="498.3" width="34.4" height="27.5" rx="1" fill="rgb(71,71,68)"/><rect x="263.84" y="498.7" width="33.6" height="54.2" rx="1" fill="none" stroke="#b4b4b4" stroke-width="1"/><text x="280.64" y="562" font-size="6.5" font-weight="bold" fill="#e6e6e6" text-anchor="middle">30</text><rect x="303.18" y="498.3" width="34.4" height="55" rx="1" fill="rgb(89,89,89)"/><rect x="303.18" y="498.3" width="34.4" height="27.5" rx="1" fill="rgb(83,83,79)"/><rect x="303.58" y="498.7" width="33.6" height="54.2" rx="1" fill="none" stroke="#b4b4b4" stroke-width="1"/><text x="320.38" y="562" font-size="6.5" font-weight="bold" fill="#e6e6e6" text-anchor="middle">35</text><rect x="342.92" y="498.3" width="34.4" height="55" rx="1" fill="rgb(102,102,102)"/><rect x="342.92" y="498.3" width="34.4" height="27.5" rx="1" fill="rgb(95,96,91)"/><rect x="343.32" y="498.7" width="33.6" height="54.2" rx="1" fill="none" stroke="#b4b4b4" stroke-width="1"/><text x="360.12" y="562" font-size="6.5" font-weight="bold" fill="#e6e6e6" text-anchor="middle">40</text><rect x="382.66" y="498.3" width="34.4" height="55" rx="1" fill="rgb(115,115,115)"/><rect x="382.66" y="498.3" width="34.4" height="27.5" rx="1" fill="rgb(107,108,102)"/><rect x="383.06" y="498.7" width="33.6" height="54.2" rx="1" fill="none" stroke="#b4b4b4" stroke-width="1"/><text x="399.86" y="562" font-size="6.5" font-weight="bold" fill="#e6e6e6" text-anchor="middle">45</text><rect x="422.40" y="498.3" width="34.4" height="55" rx="1" fill="rgb(127,127,127)"/><rect x="422.40" y="498.3" width="34.4" height="27.5" rx="1" fill="rgb(118,119,113)"/><rect x="422.80" y="498.7" width="33.6" height="54.2" rx="1" fill="none" stroke="#b4b4b4" stroke-width="1"/><text x="439.60" y="562" font-size="6.5" font-weight="bold" fill="#e6e6e6" text-anchor="middle">50</text><rect x="462.14" y="498.3" width="34.4" height="55" rx="1" fill="rgb(140,140,140)"/><rect x="462.14" y="498.3" width="34.4" height="27.5" rx="1" fill="rgb(131,131,125)"/><rect x="462.54" y="498.7" width="33.6" height="54.2" rx="1" fill="none" stroke="#b4b4b4" stroke-width="1"/><text x="479.34" y="562" font-size="6.5" font-weight="bold" fill="#e6e6e6" text-anchor="middle">55</text><rect x="501.88" y="498.3" width="34.4" height="55" rx="1" fill="rgb(153,153,153)"/><rect x="501.88" y="498.3" width="34.4" height="27.5" rx="1" fill="rgb(143,144,137)"/><rect x="502.28" y="498.7" width="33.6" height="54.2" rx="1" fill="none" stroke="#b4b4b4" stroke-width="1"/><text x="519.08" y="562" font-size="6.5" font-weight="bold" fill="#e6e6e6" text-anchor="middle">60</text><rect x="541.62" y="498.3" width="34.4" height="55" rx="1" fill="rgb(166,166,166)"/><rect x="541.62" y="498.3" width="34.4" height="27.5" rx="1" fill="rgb(156,157,150)"/><rect x="542.02" y="498.7" width="33.6" height="54.2" rx="1" fill="none" stroke="#b4b4b4" stroke-width="1"/><text x="558.82" y="562" font-size="6.5" font-weight="bold" fill="#e6e6e6" text-anchor="middle">65</text><rect x="581.36" y="498.3" width="34.4" height="55" rx="1" fill="rgb(178,178,178)"/><rect x="581.36" y="498.3" width="34.4" height="27.5" rx="1" fill="rgb(168,169,162)"/><rect x="581.76" y="498.7" width="33.6" height="54.2" rx="1" fill="none" stroke="#b4b4b4" stroke-width="1"/><text x="598.56" y="562" font-size="6.5" font-weight="bold" fill="#e6e6e6" text-anchor="middle">70</text><rect x="621.10" y="498.3" width="34.4" height="55" rx="1" fill="rgb(191,191,191)"/><rect x="621.10" y="498.3" width="34.4" height="27.5" rx="1" fill="rgb(182,183,175)"/><rect x="621.50" y="498.7" width="33.6" height="54.2" rx="1" fill="none" stroke="#b4b4b4" stroke-width="1"/><text x="638.30" y="562" font-size="6.5" font-weight="bold" fill="#e6e6e6" text-anchor="middle">75</text><rect x="660.84" y="498.3" width="34.4" height="55" rx="1" fill="rgb(204,204,204)"/><rect x="660.84" y="498.3" width="34.4" height="27.5" rx="1" fill="rgb(196,196,189)"/><rect x="661.24" y="498.7" width="33.6" height="54.2" rx="1" fill="none" stroke="#b4b4b4" stroke-width="1"/><text x="678.04" y="562" font-size="6.5" font-weight="bold" fill="#e6e6e6" text-anchor="middle">80</text><rect x="700.58" y="498.3" width="34.4" height="55" rx="1" fill="rgb(217,217,217)"/><rect x="700.58" y="498.3" width="34.4" height="27.5" rx="1" fill="rgb(210,211,204)"/><rect x="700.98" y="498.7" width="33.6" height="54.2" rx="1" fill="none" stroke="#b4b4b4" stroke-width="1"/><text x="717.78" y="562" font-size="6.5" font-weight="bold" fill="#e6e6e6" text-anchor="middle">85</text><rect x="740.32" y="498.3" width="34.4" height="55" rx="1" fill="rgb(229,229,229)"/><rect x="740.32" y="498.3" width="34.4" height="27.5" rx="1" fill="rgb(223,224,217)"/><rect x="740.72" y="498.7" width="33.6" height="54.2" rx="1" fill="none" stroke="#b4b4b4" stroke-width="1"/><text x="757.52" y="562" font-size="6.5" font-weight="bold" fill="#e6e6e6" text-anchor="middle">90</text><rect x="780.06" y="498.3" width="34.4" height="55" rx="1" fill="rgb(242,242,242)"/><rect x="780.06" y="498.3" width="34.4" height="27.5" rx="1" fill="rgb(238,238,232)"/><rect x="780.46" y="498.7" width="33.6" height="54.2" rx="1" fill="none" stroke="#b4b4b4" stroke-width="1"/><text x="797.26" y="562" font-size="6.5" font-weight="bold" fill="#e6e6e6" text-anchor="middle">95</text><rect x="819.80" y="498.3" width="34.4" height="55" rx="1" fill="rgb(255,255,255)"/><rect x="819.80" y="498.3" width="34.4" height="27.5" rx="1" fill="rgb(253,254,248)"/><rect x="820.20" y="498.7" width="33.6" height="54.2" rx="1" fill="none" stroke="#b4b4b4" stroke-width="1"/><text x="837.00" y="562" font-size="6.5" font-weight="bold" fill="#e6e6e6" text-anchor="middle">100</text><text transform="translate(23,520) rotate(-90)" font-size="6.2" font-weight="bold" fill="#ddd">Actual</text><text transform="translate(23,551) rotate(-90)" font-size="6.2" font-weight="bold" fill="#ddd">Target</text></svg>
<div class="abs panel " style="left:16px;top:575px;width:266px;height:101px;">
<div class="abs hd" style="letter-spacing:-0.641px">Gamma</div><div class="abs row" style="top:19px;width:264px;"><div class="abs lab" style="width:190px;background:#f2f2f2;letter-spacing:0.043px">Target Gamma</div><div class="abs val" style="left:191px;width:73px;background:#f2f2f2;">2.2</div></div><div class="abs row" style="top:39px;width:264px;"><div class="abs lab" style="width:190px;background:#fff;letter-spacing:-0.126px">Avearage Gamma</div><div class="abs val" style="left:191px;width:73px;background:#fff;">2.25</div></div><div class="abs row" style="top:59px;width:264px;"><div class="abs lab" style="width:190px;background:#fff;letter-spacing:0.021px">Average Gamma dark (0-50)</div><div class="abs val" style="left:191px;width:73px;background:#fff;">2.22</div></div><div class="abs row" style="top:79px;width:264px;"><div class="abs lab" style="width:190px;background:#fff;letter-spacing:0.071px">Average Gamma light (50-100)</div><div class="abs val" style="left:191px;width:73px;background:#fff;">2.28</div></div><div class="abs" style="left:190px;top:19px;width:1px;height:80px;background:#000;"></div><div class="abs" style="left:0;top:19px;width:264px;height:1px;background:rgba(0,0,0,0.55);"></div>
</div>
<div class="abs panel " style="left:293px;top:575px;width:296px;height:101px;">
<div class="abs hd" style="letter-spacing:0.026px">Colour Temperature and White Point</div><div class="abs row" style="top:19px;width:294px;"><div class="abs lab" style="width:221px;background:#fff;letter-spacing:-0.055px">Average Greyscale Temp (K)</div><div class="abs val" style="left:222px;width:72px;background:#fff;">6358</div></div><div class="abs row" style="top:39px;width:294px;"><div class="abs lab" style="width:221px;background:#fff;letter-spacing:0.072px">Deviance from target 6500K</div><div class="abs val" style="left:222px;width:72px;background:#4cb85c;">2%</div></div><div class="abs row" style="top:59px;width:294px;"><div class="abs lab" style="width:221px;background:#fff;letter-spacing:0.158px">White Point Temp (K)</div><div class="abs val" style="left:222px;width:72px;background:#fff;">6287</div></div><div class="abs row" style="top:79px;width:294px;"><div class="abs lab" style="width:221px;background:#fff;letter-spacing:0.072px">Deviance from target 6500K</div><div class="abs val" style="left:222px;width:72px;background:#70c76c;">3%</div></div><div class="abs" style="left:221px;top:19px;width:1px;height:80px;background:#000;"></div><div class="abs" style="left:0;top:19px;width:294px;height:1px;background:rgba(0,0,0,0.55);"></div><div class="abs" style="left:0;top:59px;width:294px;height:1px;background:#000;"></div>
</div>
<div class="abs panel " style="left:600px;top:575px;width:257px;height:101px;">
<div class="abs hd" style="letter-spacing:-0.2px">Greyscale Accuracy</div><div class="abs row" style="top:19px;width:255px;"><div class="abs lab" style="width:191px;background:#fff;letter-spacing:-0.231px">Greyscale dE average</div><div class="abs val" style="left:192px;width:63px;background:#b7dc78;">2.3</div></div><div class="abs row" style="top:39px;width:255px;"><div class="abs lab" style="width:191px;background:#fff;letter-spacing:-0.103px">Light Greyscale dE average</div><div class="abs val" style="left:192px;width:63px;background:#fdd87c;">3.2</div></div><div class="abs row" style="top:59px;width:255px;"><div class="abs lab" style="width:191px;background:#fff;letter-spacing:-0.018px">White Point dE</div><div class="abs val" style="left:192px;width:63px;background:#fc8d4e;">4.2</div></div><div class="abs row" style="top:79px;width:255px;"><div class="abs lab" style="width:191px;background:#fff;letter-spacing:-0.341px">Max Greyscale dE</div><div class="abs val" style="left:192px;width:63px;background:#fc8d4e;">4.2</div></div><div class="abs" style="left:191px;top:19px;width:1px;height:80px;background:#000;"></div><div class="abs" style="left:0;top:19px;width:255px;height:1px;background:rgba(0,0,0,0.55);"></div>
</div>
</body></html>
